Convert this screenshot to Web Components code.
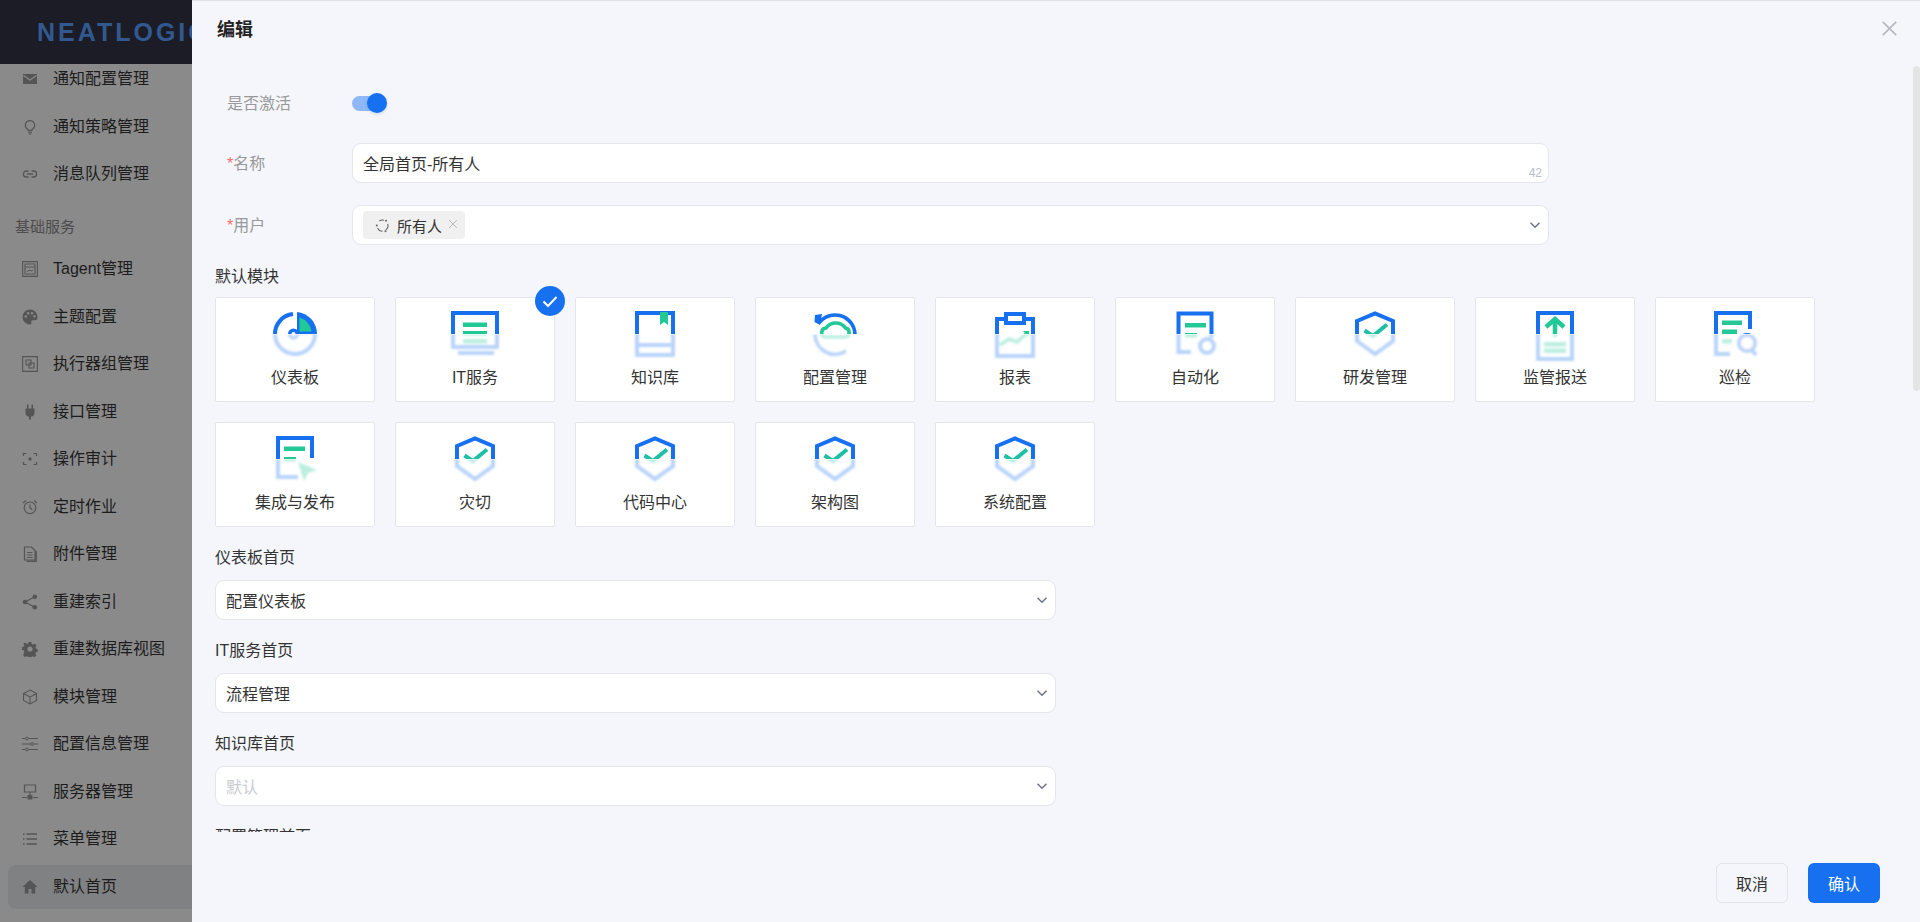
<!doctype html>
<html lang="zh">
<head>
<meta charset="utf-8">
<title>默认首页</title>
<style>
  html, body { margin: 0; height: 100%; overflow: hidden; }
  body { font: 16px "Liberation Sans", "Noto Sans CJK SC", sans-serif; color: #333; }
</style>
</head>
<body>
<app-shell>
  <side-nav></side-nav>
  <edit-drawer></edit-drawer>
</app-shell>

<script>
const BLUE = "#1670f0";
const GREEN = "#22c997";

/* ---------- sidebar icons, 16x16 box, drawn in currentColor ---------- */
const navIcons = {
  mail: `<path fill="currentColor" d="M1 3h14v10H1z"/><path fill="none" stroke="#8a8a8a" stroke-width="1.4" d="M1.5 4.5 8 9l6.5-4.5"/>`,
  bulb: `<path fill="none" stroke="currentColor" stroke-width="1.2" d="M8 1.6a4.6 4.6 0 0 0-2.6 8.4c.5.4.7.9.7 1.4h3.8c0-.5.2-1 .7-1.4A4.6 4.6 0 0 0 8 1.6z"/><path stroke="currentColor" stroke-width="1.2" d="M6.2 13.4h3.6M6.8 15h2.4"/>`,
  link: `<path fill="none" stroke="currentColor" stroke-width="1.3" d="M6.5 5H4.4a3 3 0 0 0 0 6h2.1M9.5 5h2.1a3 3 0 0 1 0 6H9.5M5 8h6"/>`,
  tagent: `<path fill="none" stroke="currentColor" stroke-width="1.1" d="M.6.6h14.8v14.8H.6zM3 3h10v10H3z"/><path fill="none" stroke="currentColor" d="M3 6h10M5 11l2-2 2 1 2-1"/>`,
  palette: `<path fill="currentColor" fill-rule="evenodd" d="M8 .5a7.5 7.5 0 0 0 0 15c1.4 0 1.8-1 1.3-2-.5-1.2.2-2.3 1.5-2.3h2.2c1.5 0 2.5-1 2.5-2.7C15.5 3.8 12.2.5 8 .5zM3.8 8.800a1.300 1.300 0 1 1 0-2.600 1.300 1.300 0 0 1 0 2.600zm2.400-3.300a1.300 1.300 0 1 1 0-2.600 1.300 1.300 0 0 1 0 2.600zm3.800 0a1.300 1.300 0 1 1 0-2.600 1.300 1.300 0 0 1 0 2.600zm2.500 3a1.300 1.300 0 1 1 0-2.600 1.300 1.300 0 0 1 0 2.600z"/>`,
  group: `<path fill="none" stroke="currentColor" stroke-width="1.1" d="M.6.6h14.8v14.8H.6zM4 4h5v5H4zM7 7h5v5H7z"/>`,
  plug: `<path fill="currentColor" d="M5 .5h1.5v4H5zM9.5.5H11v4H9.5zM3.5 4.500h9v4.300a4 4 0 0 1-3.500 4V15.500H7v-2.700a4 4 0 0 1-3.500-4z"/>`,
  scan: `<path fill="none" stroke="currentColor" stroke-width="1.2" d="M1.5 5V2.500h3M11.5 2.500h3V5M14.500 11v2.500h-3M4.500 13.500h-3V11"/><circle cx="8" cy="8" r="1.700" fill="currentColor"/>`,
  clock: `<circle cx="8" cy="8.800" r="5.800" fill="none" stroke="currentColor" stroke-width="1.2"/><path fill="none" stroke="currentColor" stroke-width="1.2" d="M8 5.500v3.500l2.300 1.500M1 4l3-2.500M15 4l-3-2.500"/>`,
  file: `<path fill="none" stroke="currentColor" stroke-width="1.2" d="M2.500 1h7l3.500 3.500V14H2.500zM5 6.500h5.500M5 9h5.500M5 11.500h5.500M4.500 15.400h9.800V5"/>`,
  share: `<g fill="currentColor"><circle cx="12.800" cy="2.800" r="2.300"/><circle cx="3" cy="8" r="2.300"/><circle cx="12.800" cy="13.200" r="2.300"/></g><path fill="none" stroke="currentColor" stroke-width="1.2" d="M12.800 2.800 3 8l9.800 5.200"/>`,
  gear: `<path fill="currentColor" fill-rule="evenodd" d="M6.500.5h3l.4 2 1.500.7 1.800-1 2 2.300-1.200 1.600.4 1.500 2 .6v3l-2 .5-.5 1.500 1.200 1.700-2 2.100-1.800-1-1.500.6-.4 2h-3l-.4-2-1.500-.6-1.800 1-2-2.100L1.900 11l-.5-1.500-2-.5V6l2-.6.5-1.500L.7 2.300l2-1.100 1.800 1L6 2.500zM8 5.200a2.800 2.800 0 1 0 0 5.600 2.800 2.800 0 0 0 0-5.600z" transform="translate(.6 .6) scale(.92)"/>`,
  cube: `<path fill="none" stroke="currentColor" stroke-width="1.1" d="M8 1l6.500 3.500v7L8 15l-6.500-3.500v-7zM1.800 4.700 8 8l6.200-3.300M8 8v6.700"/>`,
  sliders: `<path fill="none" stroke="currentColor" stroke-width="1.1" d="M0 2.500h3.500M6.500 2.500H16M0 8h8.500M11.500 8H16M0 13.500h3.500M6.500 13.500H16"/><g fill="none" stroke="currentColor"><circle cx="5" cy="2.500" r="1.400"/><circle cx="10" cy="8" r="1.400"/><circle cx="5" cy="13.500" r="1.400"/></g>`,
  server: `<path fill="none" stroke="currentColor" stroke-width="1.2" d="M2.500 1h11v7h-11zM8 8v3M0 13.500h5M11 13.500h5"/><path fill="currentColor" d="M5.500 11h5v4.500h-5z"/>`,
  list: `<path stroke="currentColor" stroke-width="1.3" d="M4.500 3H15M4.500 8H15M4.500 13H15"/><g fill="currentColor"><rect x="1" y="2.300" width="1.500" height="1.500"/><rect x="1" y="7.300" width="1.500" height="1.500"/><rect x="1" y="12.300" width="1.500" height="1.500"/></g>`,
  home: `<path fill="currentColor" d="M8 1 .5 8h2.300v6.500h3.700V10h3v4.500h3.700V8h2.300z"/>`
};

class NavIcon extends HTMLElement {
  connectedCallback() {
    const name = this.getAttribute("name");
    this.attachShadow({ mode: "open" }).innerHTML = `
      <style>:host { display: block; width: 16px; height: 16px; color: #555; flex: none; } svg { display: block; }</style>
      <svg width="16" height="16" viewBox="0 0 16 16">${navIcons[name] || ""}</svg>`;
  }
}
customElements.define("nav-icon", NavIcon);

/* ---------- module icons: crisp top half, frosted bottom half ---------- */
const frame = (d, w = 4) => `<path d="${d}" fill="none" stroke="${BLUE}" stroke-width="${w}"/>`;
const bar = (x, y, w, h = 4.5) => `<rect x="${x}" y="${y}" width="${w}" height="${h}" fill="${GREEN}"/>`;
const shield = frame("M6 11 24 3.500 42 11V31L24 44 6 31Z") +
  `<path d="M13.500 20.500 22 26 36 14.500" fill="none" stroke="#1fbfa5" stroke-width="4"/>`;

const moduleArt = {
  dashboard: frame("M22 4.100A20 20 0 1 0 44 24") +
    `<path d="M26 2A22 22 0 0 1 46 24H26Z" fill="${BLUE}"/><path d="M28.500 7.500A17 17 0 0 1 40.500 21.500H28.500Z" fill="${GREEN}"/>
     <circle cx="22.500" cy="24" r="5.500" fill="${BLUE}"/><circle cx="22.500" cy="24" r="2" fill="#fff"/>`,
  monitor: frame("M2 37V3H46V37Z") + `<rect x="7" y="41" width="36" height="4" fill="${BLUE}"/>` +
    bar(12, 12.5, 24) + bar(12, 21, 24) + bar(12, 29, 24),
  book: frame("M6 45V3H42V45ZM6 35H42") + `<path d="M29 2H37V15L33 12 29 15Z" fill="${GREEN}"/>`,
  cloud: frame("M8 13A20 20 0 0 1 44 24", 3.6) + frame("M4 24A20 20 0 0 0 35 41", 3.6) +
    `<path d="M4 5 11 4 9 15 3.500 12Z" fill="${BLUE}"/>
     <path d="M14 27H34.500A4.600 4.600 0 0 0 34.500 18 12 12 0 0 0 15 18 4.600 4.600 0 0 0 14 27Z" fill="none" stroke="${GREEN}" stroke-width="3.600"/>`,
  report: frame("M14 9H6V46H42V9H34") + frame("M15 4H33V13H15Z") +
    `<path d="M9 35 18 29 26 32 35 24" fill="none" stroke="${GREEN}" stroke-width="3.600"/><path d="M32 21H38V27Z" fill="${GREEN}"/>`,
  auto: frame("M20 42H7.500V3.500H40.500V28") + bar(14, 13, 21) + bar(14, 23, 12) +
    `<circle cx="36" cy="36" r="7" fill="none" stroke="${BLUE}" stroke-width="4"/>`,
  shield,
  upload: frame("M7 3H41V49H7Z") +
    `<path d="M24 27V9M15 17 24 9 33 17" fill="none" stroke="${GREEN}" stroke-width="4.500"/>` +
    bar(13, 32, 22) + bar(13, 38.5, 22),
  inspect: frame("M19 44H5V3H39V19") + bar(11, 10.5, 20) + bar(11, 19.5, 15) + bar(11, 29, 10) +
    `<circle cx="36" cy="33" r="8" fill="#fff" stroke="${BLUE}" stroke-width="4"/><path d="M41 40 45 45" stroke="${BLUE}" stroke-width="4"/>`,
  publish: frame("M27 42H7V3H41V23") + bar(13, 11.5, 21) + bar(13, 22, 12) +
    `<path d="M27 27 46 35 37 38 33 46Z" fill="${GREEN}"/>`
};

let clipCount = 0;
class ModuleIcon extends HTMLElement {
  connectedCallback() {
    const art = moduleArt[this.getAttribute("name")] || "";
    const id = "m" + clipCount++;
    this.attachShadow({ mode: "open" }).innerHTML = `
      <style>:host { display: block; width: 48px; height: 48px; } svg { display: block; overflow: visible; }</style>
      <svg width="48" height="48" viewBox="0 0 48 48">
        <defs>
          <clipPath id="${id}t"><rect x="-4" y="-4" width="56" height="28"/></clipPath>
          <clipPath id="${id}b"><rect x="-4" y="24.5" width="56" height="32"/></clipPath>
          <filter id="${id}f" x="-20%" y="-20%" width="140%" height="140%"><feGaussianBlur stdDeviation="1"/></filter>
        </defs>
        <g clip-path="url(#${id}t)">${art}</g>
        <g clip-path="url(#${id}b)"><g opacity=".3" filter="url(#${id}f)">${art}</g></g>
      </svg>`;
  }
}
customElements.define("module-icon", ModuleIcon);

/* ---------- shell ---------- */
const shellTpl = document.createElement("template");
shellTpl.innerHTML = `
  <style>
    :host { display: grid; grid-template-columns: 192px 1728px; grid-template-rows: 922px; height: 922px; overflow: hidden; }
  </style>
  <slot></slot>`;
class AppShell extends HTMLElement {
  constructor() {
    super();
    this.attachShadow({ mode: "open" }).appendChild(shellTpl.content.cloneNode(true));
  }
}
customElements.define("app-shell", AppShell);

/* ---------- sidebar ---------- */
const navGroups = [
  { items: [["mail", "通知配置管理"], ["bulb", "通知策略管理"], ["link", "消息队列管理"]] },
  { title: "基础服务", items: [["tagent", "Tagent管理"], ["palette", "主题配置"], ["group", "执行器组管理"], ["plug", "接口管理"],
    ["scan", "操作审计"], ["clock", "定时作业"], ["file", "附件管理"], ["share", "重建索引"], ["gear", "重建数据库视图"],
    ["cube", "模块管理"], ["sliders", "配置信息管理"], ["server", "服务器管理"], ["list", "菜单管理"], ["home", "默认首页", true]] }
];

class SideNav extends HTMLElement {
  connectedCallback() {
    const rows = navGroups.map((g) => `
      ${g.title ? `<div class="title">${g.title}</div>` : ""}
      ${g.items.map(([icon, text, active]) => `
        <div class="row${active ? " active" : ""}"><nav-icon name="${icon}"></nav-icon><span>${text}</span></div>`).join("")}
    `).join("");
    this.attachShadow({ mode: "open" }).innerHTML = `
      <style>
        :host { display: flex; flex-direction: column; height: 922px; background: #8a8a8a; overflow: hidden; color: #1c1c1c; }
        .logo { height: 64px; flex: none; background: #1c1c27; box-sizing: border-box; padding-left: 37px;
          display: flex; align-items: center; overflow: hidden; }
        .logo span { font: 700 25px/1 "Liberation Sans", sans-serif; letter-spacing: 3px; color: #31598f; white-space: nowrap; }
        .list { padding: 0 0 0 8px; margin-top: -7px; }
        .row { height: 44px; margin-bottom: 3.5px; display: flex; align-items: center; gap: 15px; padding-left: 14px; border-radius: 8px 0 0 8px; }
        .row span { line-height: 20px; }
        .active { background: #808183; }
        .title { height: 40px; margin: 7px 0 4px; padding: 4px 0 0 7px; box-sizing: border-box; display: flex; align-items: center; color: #4c4c4c; font-size: 15px; }
      </style>
      <div class="logo"><span>NEATLOGIC</span></div>
      <div class="list">${rows}</div>`;
  }
}
customElements.define("side-nav", SideNav);

/* ---------- form pieces ---------- */
class SelectBox extends HTMLElement {
  connectedCallback() {
    const root = this.attachShadow({ mode: "open" });
    root.innerHTML = `
      <style>
        :host { display: flex; align-items: center; height: 40px; box-sizing: border-box; background: #fff;
          border: 1px solid #e4e6eb; border-radius: 9px; padding: 0 7px 0 10px; color: #333; }
        :host([placeholder]) { color: #c9cbd0; }
        .v { flex: 1; display: flex; align-items: center; }
        svg { display: block; flex: none; }
      </style>
      <div class="v"><slot></slot></div>
      <svg width="12" height="12" viewBox="0 0 12 12"><path d="M1.5 3.800 6 8.300l4.500-4.500" fill="none" stroke="#6f7486" stroke-width="1.5"/></svg>`;
  }
}
customElements.define("select-box", SelectBox);

class TextBox extends HTMLElement {
  connectedCallback() {
    this.attachShadow({ mode: "open" }).innerHTML = `
      <style>
        :host { display: flex; align-items: center; position: relative; height: 40px; box-sizing: border-box; background: #fff;
          border: 1px solid #e4e6eb; border-radius: 9px; padding: 0 10px; color: #333; }
        .count { position: absolute; right: 6px; bottom: 2px; font-size: 12px; line-height: 14px; color: #b9bcc4; }
      </style>
      <slot></slot><span class="count">${this.getAttribute("count") || ""}</span>`;
  }
}
customElements.define("text-box", TextBox);

class UserTag extends HTMLElement {
  connectedCallback() {
    this.attachShadow({ mode: "open" }).innerHTML = `
      <style>
        :host { display: inline-flex; align-items: center; height: 28px; width: 102px; box-sizing: border-box; padding-left: 12px;
          background: #f0f0f0; border-radius: 4px; color: #333; font-size: 15px; }
        svg { display: block; flex: none; }
        .ic { margin-right: 7px; }
        .x { margin-left: 6px; margin-top: -3px; }
      </style>
      <svg class="ic" width="15" height="15" viewBox="0 0 15 15"><g fill="none" stroke="#666" stroke-width="1.1"><path d="M4.300 3.100A5.400 5.400 0 0 1 9 2.200M12.700 6A5.400 5.400 0 0 1 10.700 12M7.500 13.200A5.400 5.400 0 0 1 2.600 10"/></g><g fill="#666"><circle cx="1.800" cy="7.500" r="1"/><circle cx="11" cy="2.700" r="1"/><circle cx="10.500" cy="13.200" r="1"/></g></svg>
      <slot></slot>
      <svg class="x" width="10" height="10" viewBox="0 0 10 10"><path d="M1 1l8 8M9 1l-8 8" stroke="#bbb" stroke-width="1"/></svg>`;
  }
}
customElements.define("user-tag", UserTag);

class ToggleSwitch extends HTMLElement {
  connectedCallback() {
    this.attachShadow({ mode: "open" }).innerHTML = `
      <style>
        :host { display: block; position: relative; width: 35px; height: 20px; }
        .track { position: absolute; left: 0; top: 2.5px; width: 28px; height: 15px; border-radius: 8px; background: #8fb8f8; }
        .thumb { position: absolute; right: 0; top: 0; width: 20px; height: 20px; border-radius: 50%; background: ${BLUE}; box-shadow: 0 1px 3px rgba(22,112,240,.25); }
      </style>
      <div class="track"></div><div class="thumb"></div>`;
  }
}
customElements.define("toggle-switch", ToggleSwitch);

class FormRow extends HTMLElement {
  connectedCallback() {
    const required = this.hasAttribute("required");
    this.attachShadow({ mode: "open" }).innerHTML = `
      <style>
        :host { display: grid; grid-template-columns: 125px 1197px; align-items: center; padding-left: 12px; min-height: 40px; }
        .label { color: #999; line-height: 20px; margin-top: 2px; }
        i { color: #f56c6c; font-style: normal; }
      </style>
      <div class="label">${required ? "<i>*</i>" : ""}${this.getAttribute("label")}</div>
      <div><slot></slot></div>`;
  }
}
customElements.define("form-row", FormRow);

class ModuleCard extends HTMLElement {
  connectedCallback() {
    const badge = this.hasAttribute("selected") ? `
      <span class="badge"><svg width="30" height="30" viewBox="0 0 30 30"><path d="M8.5 15.5 13 20l8.5-9" fill="none" stroke="#fff" stroke-width="2"/></svg></span>` : "";
    this.attachShadow({ mode: "open" }).innerHTML = `
      <style>
        :host { display: flex; flex-direction: column; align-items: center; position: relative; width: 160px; height: 105px;
          box-sizing: border-box; background: #fff; border: 1px solid #e4e6eb; border-radius: 2px; padding-top: 12px; color: #333; }
        .name { margin-top: 10px; line-height: 20px; }
        .badge { position: absolute; top: -12px; right: -11px; width: 30px; height: 30px; border-radius: 50%; background: ${BLUE}; }
        svg { display: block; }
      </style>
      <module-icon name="${this.getAttribute("icon")}"></module-icon>
      <div class="name"><slot></slot></div>${badge}`;
  }
}
customElements.define("module-card", ModuleCard);

class PageField extends HTMLElement {
  connectedCallback() {
    this.attachShadow({ mode: "open" }).innerHTML = `
      <style>
        :host { display: block; width: 841px; margin-bottom: 19px; }
        .label { line-height: 22px; padding-top: 1px; margin-bottom: 11px; color: #333; }
      </style>
      <div class="label">${this.getAttribute("label")}</div>
      <slot></slot>`;
  }
}
customElements.define("page-field", PageField);

/* ---------- drawer ---------- */
const drawerTpl = document.createElement("template");
drawerTpl.innerHTML = `
  <style>
    :host { display: grid; grid-template-rows: 63px 768px 90px; position: relative; height: 922px; box-sizing: border-box; background: #f4f6fb; border-top: 1px solid #e2e2e2; color: #333; overflow: hidden; }
    header { display: flex; align-items: center; justify-content: space-between; padding: 0 23px 9px 25px; box-sizing: border-box; }
    h2 { margin: 0; font-size: 18px; font-weight: 700; color: #222; }
    .content { overflow: hidden; box-sizing: border-box; padding: 19px 0 0 23px; min-height: 0; }
    .thumb { position: absolute; right: 0; top: 65px; width: 7px; height: 325px; border-radius: 4px; background: #e4e4e4; }
    .rows { display: flex; flex-direction: column; }
    .rows form-row:nth-child(2) { margin-top: 20px; }
    .rows form-row:nth-child(3) { margin-top: 22px; }
    .section { line-height: 22px; margin: 21px 0 9px; }
    .grid { display: grid; grid-template-columns: repeat(9, 160px); column-gap: 20px; row-gap: 20px; margin-bottom: 19px; }
    footer { box-sizing: border-box; padding: 31px 40px 0 0; display: flex; justify-content: flex-end; gap: 20px; }
    button { width: 72px; height: 40px; box-sizing: border-box; border-radius: 6px; font: inherit; padding: 0; }
    .ghost { background: #f4f6fb; border: 1px solid #e2e4e9; color: #333; }
    .primary { background: ${BLUE}; border: 0; color: #fff; }
    svg { display: block; }
  </style>
  <header>
    <h2>编辑</h2>
    <svg width="15" height="15" viewBox="0 0 15 15"><path d="M.8.800l13.400 13.400M14.200.800.800 14.200" stroke="#b6b9c0" stroke-width="1.7"/></svg>
  </header>
  <div class="content">
    <div class="rows">
      <form-row label="是否激活"><toggle-switch></toggle-switch></form-row>
      <form-row label="名称" required><text-box count="42">全局首页-所有人</text-box></form-row>
      <form-row label="用户" required><select-box><user-tag>所有人</user-tag></select-box></form-row>
    </div>
    <div class="section">默认模块</div>
    <div class="grid">
      <module-card icon="dashboard">仪表板</module-card>
      <module-card icon="monitor" selected>IT服务</module-card>
      <module-card icon="book">知识库</module-card>
      <module-card icon="cloud">配置管理</module-card>
      <module-card icon="report">报表</module-card>
      <module-card icon="auto">自动化</module-card>
      <module-card icon="shield">研发管理</module-card>
      <module-card icon="upload">监管报送</module-card>
      <module-card icon="inspect">巡检</module-card>
      <module-card icon="publish">集成与发布</module-card>
      <module-card icon="shield">灾切</module-card>
      <module-card icon="shield">代码中心</module-card>
      <module-card icon="shield">架构图</module-card>
      <module-card icon="shield">系统配置</module-card>
    </div>
    <page-field label="仪表板首页"><select-box>配置仪表板</select-box></page-field>
    <page-field label="IT服务首页"><select-box>流程管理</select-box></page-field>
    <page-field label="知识库首页"><select-box placeholder>默认</select-box></page-field>
    <page-field label="配置管理首页"></page-field>
  </div>
  <div class="thumb"></div>
  <footer>
    <button class="ghost">取消</button>
    <button class="primary">确认</button>
  </footer>`;

class EditDrawer extends HTMLElement {
  constructor() {
    super();
    this.attachShadow({ mode: "open" }).appendChild(drawerTpl.content.cloneNode(true));
  }
}
customElements.define("edit-drawer", EditDrawer);
</script>
</body>
</html>
